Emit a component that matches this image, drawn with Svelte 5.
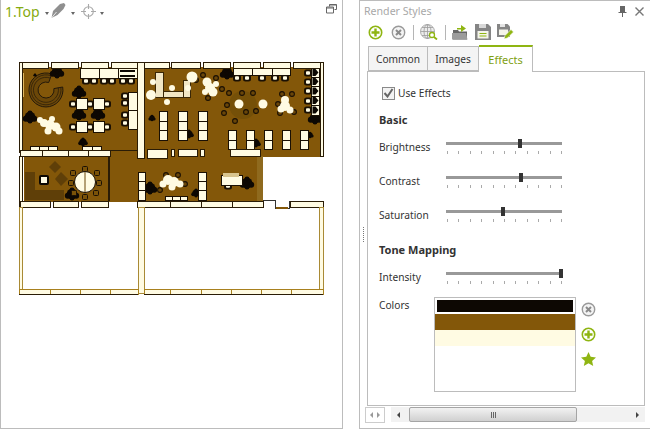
<script>
  const cream = '#fffbe3';
  const brown = '#835709';
  const dark = '#1a1004';

  // floor plan, in page coordinates
  const rooms = [
    [22, 67, 116, 84],
    [144, 67, 177, 90],
    [24, 156, 86, 46],
    [110, 150, 153, 52]
  ];
  const shades = [
    [25, 172, 10, 28],
    [35, 190, 29, 10]
  ];
  const walls = [
    [22, 62, 26, 6], [51, 62, 27, 6], [81, 62, 27, 6], [111, 62, 26, 6],
    [144, 62, 25, 6], [171, 62, 29, 6], [203, 62, 27, 6], [233, 62, 27, 6], [263, 62, 27, 6], [293, 62, 28, 6],
    [19, 62, 3, 90], [320, 62, 3, 94], [137, 62, 7, 96],
    [20, 150, 22, 6], [42, 150, 26, 6], [68, 150, 20, 6], [88, 150, 22, 6],
    [19, 156, 3, 52], [20, 201, 30, 6], [53, 201, 25, 6], [81, 201, 27, 6],
    [137, 201, 42, 6], [170, 201, 31, 6], [201, 201, 31, 6], [232, 201, 31, 6], [290, 201, 33, 6],
    [147, 149, 20, 9], [171, 149, 3, 7], [178, 149, 19, 7], [200, 149, 4, 7], [230, 149, 30, 7]
  ];
  const lowerWalls = [
    [19, 207, 3, 86], [138, 207, 6, 86], [319, 207, 4, 86]
  ];
  const footWalls = [
    [19, 289, 31, 5], [50, 289, 30, 5], [80, 289, 30, 5], [110, 289, 28, 5], [144, 289, 26, 5],
    [170, 289, 31, 5], [201, 289, 30, 5], [231, 289, 30, 5], [261, 289, 30, 5], [291, 289, 32, 5]
  ];
  const furniture = [
    [80, 68, 19, 10], [99, 68, 19, 10], [118, 68, 19, 10],
    [76, 98, 11, 11], [93, 98, 11, 11], [76, 121, 11, 11], [93, 121, 11, 11],
    [128, 92, 9, 18], [128, 110, 9, 19],
    [30, 146, 9, 4], [39, 146, 9, 4], [48, 146, 9, 4], [82, 146, 10, 4], [92, 146, 9, 4],
    [159, 111, 8, 10], [159, 121, 8, 9], [159, 130, 8, 10],
    [178, 111, 9, 10], [178, 121, 9, 9], [178, 130, 9, 10],
    [198, 111, 9, 10], [198, 121, 9, 9], [198, 130, 9, 10],
    [228, 130, 8, 10], [228, 140, 8, 9], [246, 130, 8, 10], [246, 140, 8, 9],
    [264, 130, 8, 10], [264, 140, 8, 9], [282, 130, 8, 10], [282, 140, 8, 9],
    [300, 130, 8, 10], [300, 140, 8, 9],
    [233, 68, 19, 7], [252, 68, 20, 7], [272, 68, 18, 7],
    [311, 68, 8, 9], [311, 77, 8, 9], [311, 86, 8, 10], [311, 96, 8, 9], [311, 105, 8, 10],
    [138, 172, 7, 9], [138, 181, 7, 9], [138, 190, 7, 10],
    [198, 172, 8, 9], [198, 181, 8, 9], [198, 190, 8, 10],
    [221, 175, 21, 10], [165, 196, 7, 4], [172, 196, 8, 4], [180, 196, 7, 4]
  ];
  const counter = [[155, 72, 8, 25], [163, 91, 27, 6], [183, 80, 7, 17]];
  const stools = [
    [86, 81], [94, 81], [104, 81], [112, 81], [123, 81], [131, 81],
    [125, 96], [125, 103], [125, 115], [125, 123],
    [73, 104], [90, 104], [107, 104], [73, 127], [90, 127], [107, 127],
    [237, 78], [247, 78], [262, 78], [275, 78], [285, 78],
    [308, 73], [308, 82], [308, 91], [308, 101], [308, 110],
    [228, 186]
  ];
  const plants = [
    [57, 72, 6], [79, 92, 6], [79, 114, 6], [98, 114, 6], [30, 117, 6], [83, 142, 4],
    [72, 194, 6], [150, 188, 6], [227, 73, 6], [315, 118, 6], [189, 134, 4], [256, 143, 4],
    [310, 135, 3], [247, 183, 6], [196, 193, 4], [152, 118, 3], [35, 75, 1.500]
  ];
  const blobs = [
    [151, 95, 5], [153, 82, 3], [172, 88, 3], [167, 102, 3], [188, 88, 3], [192, 77, 5.500],
    [239, 104, 4.500], [263, 104, 4.500],
    [44, 123, 4], [50, 125, 5], [56, 127, 4.500], [48, 131, 3.500], [59, 131, 3.500], [40, 120, 3], [52, 119, 3],
    [207, 82, 4.500], [210, 88, 5], [213, 92, 4.500], [205, 92, 3], [216, 84, 3],
    [285, 100, 4], [285, 106, 5], [281, 109, 3.500], [290, 110, 3.500],
    [168, 180, 5], [174, 182, 5], [180, 184, 3.500], [163, 184, 3.500], [172, 187, 3.500]
  ];
  const rings = [
    [229, 93], [242, 93], [253, 93], [227, 105], [224, 113], [235, 121], [246, 112], [256, 111],
    [203, 75], [216, 78], [222, 89], [208, 98], [196, 80],
    [282, 94], [292, 94], [278, 104], [280, 113], [294, 112],
    [166, 175], [178, 175], [185, 184], [160, 190]
  ];
  const tableChairs = [[85, 169], [73, 173], [97, 173], [71, 183], [99, 183], [74, 193], [96, 193], [85, 197]];
  const arrows = [72.500, 81.500, 91, 100.500, 110];

  const sliders = [
    { label: 'Brightness', pos: 62 },
    { label: 'Contrast', pos: 63 },
    { label: 'Saturation', pos: 47.500 }
  ];
  const ticks = Array.from({ length: 11 });
</script>

{#snippet slider(pos)}
  <div class="slider">
    <div class="track"></div>
    <div class="thumb" style="left: {pos}%"></div>
    <div class="ticks">
      {#each ticks as _}<i></i>{/each}
    </div>
  </div>
{/snippet}

{#snippet plusIcon()}
  <svg width="15" height="15" viewBox="0 0 15 15">
    <circle cx="7.500" cy="7.500" r="6.200" fill="#fff" stroke="#8fb512" stroke-width="1.600" />
    <path d="M7.500 3.500v8M3.500 7.500h8" stroke="#8fb512" stroke-width="2.400" />
  </svg>
{/snippet}

{#snippet closeIcon()}
  <svg width="15" height="15" viewBox="0 0 15 15">
    <circle cx="7.500" cy="7.500" r="6.200" fill="#f4f4f4" stroke="#9a9a9a" stroke-width="1.400" />
    <path d="M5 5l5 5M10 5l-5 5" stroke="#8a8a8a" stroke-width="2" />
  </svg>
{/snippet}

<div class="app">
  <section class="view">
    <header class="view-bar">
      <span class="level">1.Top</span>
      <span class="caret"></span>
      <svg class="pen" width="15" height="15" viewBox="0 0 15 15">
        <path d="M0.500 15l1.500-7 7-7 4-1 1.500 2-2 4-6 6z" fill="#8f8f8f" />
        <path d="M0.500 15l5-6" stroke="#fff" stroke-width="0.800" />
      </svg>
      <span class="caret"></span>
      <svg class="target" width="15" height="15" viewBox="0 0 15 15" fill="none" stroke="#a9a9a9" stroke-width="1.100">
        <circle cx="7.500" cy="7.500" r="4.800" />
        <path d="M7.500 0v5M7.500 10v5M0 7.500h5M10 7.500h5" />
      </svg>
      <span class="caret"></span>
      <svg class="restore" width="11" height="10" viewBox="0 0 11 10" fill="none" stroke="#666">
        <path d="M3.500 2.500v-2h7v5h-2" />
        <path d="M0.500 3h7v6h-7z" />
        <path d="M3.500 1h7M0.500 4h7" />
      </svg>
    </header>

    <svg class="plan" width="340" height="406" viewBox="1 22 340 406">
      <g shape-rendering="crispEdges">
        {#each rooms as [x, y, w, h]}<rect {x} {y} width={w} height={h} fill={brown} />{/each}
        <rect x="257" y="156" width="6" height="45" fill="#8f6a1e" />
        {#each shades as [x, y, w, h]}<rect {x} {y} width={w} height={h} fill="#5f3f08" />{/each}
        <rect x="23" y="73" width="1" height="24" fill="#e0b860" />
      </g>
      <circle cx="243" cy="105" r="14" fill="#755008" />
      <path d="M51.800 74A17 17 0 1 0 62.700 87L53.900 88.600A8 8 0 1 1 48.700 82.500Z" fill="#6b4708" stroke="#24190a" stroke-width="1" />
      <path d="M50 78A12.500 12.500 0 1 0 58.300 87.800" fill="none" stroke="#24190a" stroke-width="0.700" />
      <path d="M51 75.700A15 15 0 1 0 60.800 87.400" fill="none" stroke="#24190a" stroke-width="0.700" />
      <path d="M55 161l6 6-6 6-6-6z" fill="#5f3f08" />
      <path d="M61 172l7 7-7 7-6-7z" fill="#5f3f08" />

      {#each plants as [x, y, r]}
        <g fill="#0d0803">
          <circle cx={x} cy={y} r={r * 0.9} />
          <circle cx={x - r * 0.7} cy={y + r * 0.3} r={r * 0.5} />
          <circle cx={x + r * 0.7} cy={y + r * 0.3} r={r * 0.5} />
          <circle cx={x} cy={y - r * 0.7} r={r * 0.4} />
          <circle cx={x} cy={y + r * 0.7} r={r * 0.4} />
        </g>
      {/each}

      {#each stools as [x, y]}
        <rect x={x - 4} y={y - 3.500} width="8" height="7" rx="2.500" fill={dark} />
        <rect x={x - 2} y={y - 1.800} width="4" height="3.600" rx="1" fill={cream} />
      {/each}
      {#each rings as [x, y]}
        <circle cx={x} cy={y} r="2.400" fill="#6a4608" stroke="#1a1004" stroke-width="1.100" />
      {/each}
      {#each tableChairs as [x, y]}
        <rect x={x - 2.500} y={y - 2.500} width="5" height="5" rx="1" fill="#7a5208" stroke={dark} stroke-width="1" />
      {/each}

      <g shape-rendering="crispEdges">
        {#each furniture as [x, y, w, h]}
          <rect x={x + 0.500} y={y + 0.500} width={w} height={h} fill={cream} stroke={dark} stroke-width="1" />
        {/each}
        {#each counter as [x, y, w, h]}
          <rect x={x + 0.500} y={y + 0.500} width={w} height={h} fill="#f1e6c4" stroke="#3a2706" />
        {/each}
        <rect x="223" y="173" width="16" height="4" fill="#d8c48e" />
      </g>
      <rect x="120" y="70" width="15" height="2" fill="#0d0803" />
      <rect x="120" y="75" width="15" height="2" fill="#0d0803" />
      {#each arrows as y}
        <path d="M312.500 {y - 3.500}h3l3 3.500-3 3.500h-3z" fill="#0d0803" />
      {/each}
      {#each blobs as [x, y, r]}
        <circle cx={x} cy={y} {r} fill={cream} />
      {/each}

      <circle cx="85" cy="182" r="10.500" fill={cream} stroke={dark} />
      <path d="M85 172v20" stroke="#6a4608" />
      <rect x="39" y="175" width="10" height="10" rx="2" fill="#0d0803" />
      <rect x="41" y="177" width="6" height="6" fill={cream} />

      <g shape-rendering="crispEdges">
        {#each walls as [x, y, w, h]}
          <rect x={x + 0.500} y={y + 0.500} width={w} height={h} fill={cream} stroke="#2a1c06" stroke-width="1" />
        {/each}
        {#each lowerWalls as [x, y, w, h]}
          <rect x={x + 0.500} y={y + 0.500} width={w} height={h} fill={cream} stroke="#a98a35" stroke-width="1" />
        {/each}
        {#each footWalls as [x, y, w, h]}
          <rect x={x + 0.500} y={y + 0.500} width={w} height={h} fill={cream} stroke="#a8801e" stroke-width="1" />
          <rect {x} y={y + 5} width={w} height="1" fill="#2a1c06" />
        {/each}
        <path d="M263 200.500h12v8h14v-8" fill="none" stroke="#333" />
        <rect x="276" y="207" width="12" height="2" fill={brown} />
        <rect x="108" y="157" width="2" height="44" fill="#2a1c06" />
        <rect x="110" y="150" width="27" height="1" fill="#2a1c06" />
      </g>
    </svg>
  </section>

  <section class="styles">
    <i class="grip"></i>
    <header class="title-bar">
      <span class="title">Render Styles</span>
      <svg class="pin" width="9" height="11" viewBox="0 0 9 11"><path d="M2 0h5v6h1.500v1h-3.500v4h-1v-4h-3.500v-1h1.500z" fill="#666" /></svg>
      <svg width="9" height="9" viewBox="0 0 9 9"><path d="M0.500 0.500l8 8M8.500 0.500l-8 8" stroke="#777" stroke-width="1.400" /></svg>
    </header>

    <div class="tools">
      {@render plusIcon()}
      {@render closeIcon()}
      <span class="sep"></span>
      <svg width="18" height="16" viewBox="0 0 18 16" fill="none" stroke="#9c9c9c" stroke-width="0.800">
        <circle cx="7.500" cy="7.500" r="7" fill="#ececec" />
        <path d="M0.500 7.500h14M7.500 0.500v14M2 3.500h11M2 11.500h11" />
        <ellipse cx="7.500" cy="7.500" rx="3.500" ry="7" />
        <circle cx="12" cy="11" r="2.500" fill="#fff" stroke="#8fb512" stroke-width="1.300" />
        <path d="M14 13l3 2.500" stroke="#8fb512" stroke-width="1.800" />
      </svg>
      <span class="sep"></span>
      <svg width="16" height="16" viewBox="0 0 16 16">
        <path d="M1 6h5l1 1.500h8v8h-14z" fill="#666" />
        <path d="M0 9h14l1.500 6.500h-15.500z" fill="#9c9c9c" />
        <path d="M5 4h4v-3l5 3.500-5 3.500v-2.500h-4z" fill="#8fb512" />
      </svg>
      <svg width="16" height="16" viewBox="0 0 16 16">
        <path d="M0 0h13l3 3v13h-16z" fill="#858585" />
        <rect x="4" y="0" width="7" height="4" fill="#d8d8d8" />
        <rect x="2.500" y="7" width="11" height="7.500" fill="#f4f4ea" />
        <path d="M4.500 9.500h7M4.500 12h7" stroke="#8fb512" />
      </svg>
      <svg width="17" height="16" viewBox="0 0 17 16">
        <path d="M0 0h10.500l2.500 2.500v10.500h-13z" fill="#858585" />
        <rect x="3" y="0" width="5" height="3" fill="#e4e4e4" />
        <rect x="2" y="5.500" width="9" height="5.500" fill="#f4f4ea" />
        <path d="M7 15l1-3.500 6-6 2.500 2.500-6 6z" fill="#8fb512" stroke="#fff" stroke-width="0.600" />
      </svg>
    </div>

    <nav class="tabs">
      <span class="tab">Common</span>
      <span class="tab">Images</span>
      <span class="tab active">Effects</span>
    </nav>

    <div class="pane">
      <label class="check">
        <span class="box">
          <svg width="11" height="10" viewBox="0 0 11 10"><path d="M1.500 5l3 3.500 5-7.500" fill="none" stroke="#666" stroke-width="2" /></svg>
        </span>
        Use Effects
      </label>

      <h4 class="basic">Basic</h4>
      <div class="rows">
        {#each sliders as s}
          <div class="row">
            <span class="row-label">{s.label}</span>
            {@render slider(s.pos)}
          </div>
        {/each}
      </div>

      <h4 class="tone">Tone Mapping</h4>
      <div class="row">
        <span class="row-label">Intensity</span>
        {@render slider(97.500)}
      </div>

      <div class="colors">
        <span class="row-label">Colors</span>
        <div class="color-list">
          <div class="swatch selected"><i></i></div>
          <div class="swatch" style="background: #835709"></div>
          <div class="swatch" style="background: #fffbe3"></div>
        </div>
        <div class="color-tools">
          {@render closeIcon()}
          {@render plusIcon()}
          <svg width="15" height="14" viewBox="0 0 15 14"><path d="M7.500 0l2.200 4.800 5.300 0.600-3.900 3.500 1.100 5.100-4.700-2.700-4.700 2.700 1.100-5.100-3.900-3.500 5.300-0.600z" fill="#8fb512" /></svg>
        </div>
      </div>
    </div>

    <footer class="scroll-row">
      <div class="nudge"><i class="left"></i><i class="right"></i></div>
      <div class="scrollbar">
        <i class="left arrow"></i>
        <div class="scroll-thumb"><b></b><b></b><b></b></div>
        <i class="right arrow"></i>
      </div>
    </footer>
  </section>
</div>

<style>
  :global(body) {
    margin: 0;
    background: #fff;
    font-family: "Noto Sans", sans-serif;
    font-size: 10.200px;
    color: #333;
  }

  .app {
    display: flex;
    justify-content: space-between;
    width: 650px;
    height: 429px;
    overflow: hidden;
  }

  .view {
    box-sizing: border-box;
    width: 343px;
    border: 1px solid #bcbcbc;
    border-top: 0;
    display: flex;
    flex-direction: column;
  }

  .view-bar {
    height: 22px;
    flex: none;
    display: flex;
    align-items: center;
    padding-left: 4px;
    padding-right: 3px;
    box-sizing: border-box;
  }

  .level {
    color: #86ab0f;
    font-size: 14px;
  }

  .caret {
    width: 0;
    height: 0;
    margin-top: 5px;
    border: 2.500px solid transparent;
    border-top: 3px solid #666;
    border-bottom: 0;
  }

  .level + .caret {
    margin-left: 5px;
  }

  .pen {
    margin: -1px 5px 0 2px;
  }

  .target {
    margin: 0 4px 0 6px;
  }

  .restore {
    margin-left: auto;
    margin-right: 2px;
    margin-top: -5px;
  }

  .plan {
    display: block;
    flex: none;
  }

  .styles {
    position: relative;
    width: 291px;
    flex: none;
    box-sizing: border-box;
    border-left: 1px solid #bcbcbc;
    border-top: 1px solid #bcbcbc;
    border-bottom: 1px solid #bcbcbc;
    display: flex;
    flex-direction: column;
  }

  .grip {
    position: absolute;
    left: 3px;
    top: 226px;
    height: 15px;
    width: 1px;
    border-left: 1px dotted #777;
  }

  .title-bar {
    height: 20px;
    display: flex;
    align-items: center;
    gap: 8px;
    padding: 0 6px 0 4px;
  }

  .title {
    flex: 1;
    color: #a8a8a8;
    font-size: 10.600px;
  }

  .tools {
    height: 20px;
    margin-top: 1px;
    display: flex;
    align-items: center;
    padding-left: 8px;
  }

  .tools > :nth-child(2) {
    margin-left: 8px;
  }

  .tools > :nth-child(4) {
    margin-left: 6px;
  }

  .tools > :nth-child(6) {
    margin-left: 6px;
  }

  .tools > :nth-child(7) {
    margin-left: 7px;
  }

  .tools > :nth-child(8) {
    margin-left: 6px;
  }

  .sep {
    width: 1px;
    height: 15px;
    margin-left: 7px;
    background: #b5b5b5;
  }

  .tabs {
    display: flex;
    align-items: flex-end;
    height: 26px;
    margin-top: 3px;
    padding-left: 8px;
    position: relative;
    z-index: 1;
  }

  .tab {
    box-sizing: border-box;
    height: 25px;
    display: flex;
    align-items: center;
    justify-content: center;
    width: 59px;
    background: #f4f4f4;
    border: 1px solid #bcbcbc;
    border-right: 0;
    border-bottom: 1px solid #bcbcbc;
  }

  .tab:nth-child(2) {
    width: 52px;
    border-right: 1px solid #bcbcbc;
  }

  .tab.active {
    width: 54px;
    height: 27px;
    margin-bottom: -1px;
    background: #fff;
    color: #7f9f12;
    border: 0;
    border-top: 2px solid #8fb512;
    border-right: 1px solid #bcbcbc;
    font-size: 11px;
  }

  .pane {
    box-sizing: border-box;
    height: 335px;
    margin-left: 7px;
    width: 278px;
    border: 1px solid #bcbcbc;
    padding: 13px 0 0 11px;
  }

  .check {
    display: flex;
    align-items: center;
    gap: 3px;
    margin-left: 3px;
    height: 16px;
  }

  .box {
    box-sizing: border-box;
    width: 13px;
    height: 13px;
    border: 1px solid #8a8a8a;
    background: #f3f3f3;
    display: flex;
    align-items: center;
    justify-content: center;
  }

  h4 {
    margin: 0;
    font-size: 11px;
    line-height: 14px;
    font-weight: bold;
  }

  .basic {
    margin-top: 12px;
    margin-bottom: 12px;
  }

  .tone {
    margin-top: 20px;
    margin-bottom: 12px;
  }

  .rows {
    display: flex;
    flex-direction: column;
    gap: 18px;
  }

  .row {
    display: flex;
    align-items: flex-start;
    height: 16px;
  }

  .row-label {
    width: 67px;
    flex: none;
    line-height: 16px;
  }

  .slider {
    position: relative;
    width: 116px;
    height: 16px;
  }

  .track {
    position: absolute;
    left: 0;
    right: 0;
    top: 3px;
    height: 3px;
    background: #999;
  }

  .thumb {
    position: absolute;
    top: 0;
    width: 4px;
    height: 9px;
    background: #333;
  }

  .ticks {
    position: absolute;
    left: 1px;
    right: 0;
    top: 12px;
    display: flex;
    justify-content: space-between;
  }

  .ticks i {
    width: 1px;
    height: 3px;
    background: #aaa;
  }

  .colors {
    display: flex;
    margin-top: 12px;
  }

  .colors .row-label {
    width: 55px;
  }

  .color-list {
    box-sizing: border-box;
    width: 142px;
    height: 95px;
    border: 1px solid #bcbcbc;
  }

  .swatch {
    height: 16px;
  }

  .swatch.selected {
    box-sizing: border-box;
    padding: 2px;
  }

  .swatch.selected i {
    display: block;
    height: 12px;
    background: #0d0803;
  }

  .color-tools {
    display: flex;
    flex-direction: column;
    gap: 10px;
    margin-left: 5px;
    margin-top: 5px;
  }

  .scroll-row {
    display: flex;
    gap: 6px;
    padding: 1px 5px 0 5px;
    height: 17px;
  }

  .nudge {
    box-sizing: border-box;
    width: 20px;
    height: 16px;
    border: 1px solid #ccc;
    display: flex;
    align-items: center;
    justify-content: center;
    gap: 4px;
  }

  .left,
  .right {
    width: 0;
    height: 0;
    border: 3px solid transparent;
    border-left-width: 0;
    border-right: 3px solid #999;
  }

  .right {
    border-right-width: 0;
    border-left: 3px solid #999;
  }

  .scrollbar {
    flex: 1;
    height: 15px;
    background: #f2f2f2;
    display: flex;
    align-items: center;
  }

  .arrow {
    border-right-color: #444;
    margin-left: 6px;
  }

  .arrow.right {
    border-left-color: #444;
    margin-left: 59px;
  }

  .scroll-thumb {
    box-sizing: border-box;
    width: 168px;
    height: 15px;
    margin-left: 9px;
    border: 1px solid #a5a5a5;
    border-radius: 2px;
    background: linear-gradient(#f2f2f2, #d0d0d0);
    display: flex;
    align-items: center;
    justify-content: center;
    gap: 1px;
  }

  .scroll-thumb b {
    width: 1px;
    height: 6px;
    background: #666;
  }
</style>
